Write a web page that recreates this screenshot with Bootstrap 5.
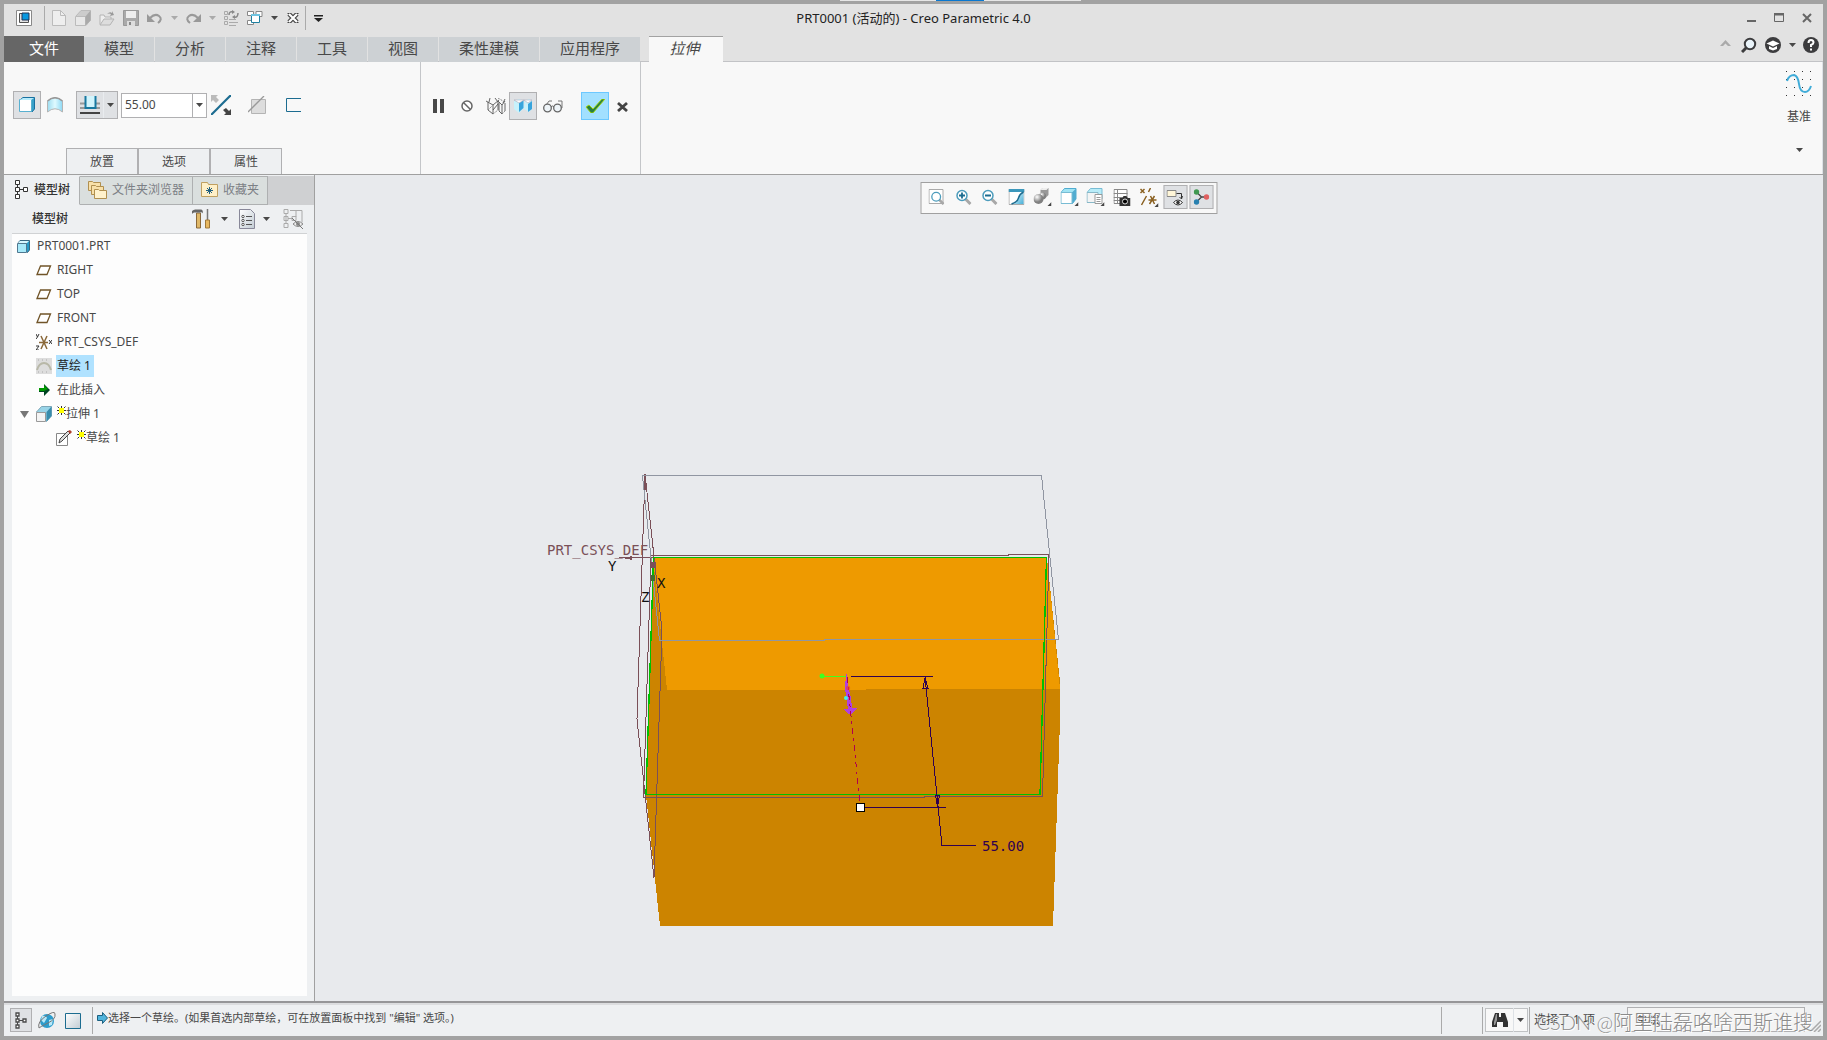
<!DOCTYPE html>
<html lang="zh-CN">
<head>
<meta charset="utf-8">
<meta name="viewport" content="width=device-width, initial-scale=1">
<title>PRT0001 (活动的) - Creo Parametric 4.0</title>
<link href="https://cdn.jsdelivr.net/npm/bootstrap@5.3.0/dist/css/bootstrap.min.css" rel="stylesheet">
<style>
:root{--frame:#a2a2a2;--ink:#484848}
body{font-family:"Noto Sans","Noto Sans CJK SC",sans-serif;font-size:12px;line-height:16px;color:var(--ink);background:#e8eaed}
button,input,select{font:inherit;color:inherit}
button{background:none;border:0;padding:0}
svg{display:block;flex:none}
.app-window{height:100vh;border:4px solid var(--frame)}
.edge-strip{top:0;left:840px;width:241px;height:1px;background:#e6e6e6}
.edge-strip span{width:48px;margin-left:96px;height:1px;background:#0a78d0}
.title-bar{height:32px;background:#e2e2e2;padding:0 0 4px 8px}
.title-text{color:#222;font-size:13px;line-height:20px}
.tool{width:24px;height:24px;display:flex;align-items:center;justify-content:center;flex:none}
.tool.drop{width:14px}
.vline{width:1px;background:#aaa;flex:none}
.vline.tall{height:24px}
.quick-bar{margin-left:-2px}
.faint{color:#aaa}
.tab-row{height:26px;background:#e2e2e2;border-bottom:1px solid #c2c3c6}
.ribbon-tab{height:25px;width:70px;margin:1px 1px 0 0;padding-bottom:3px;background:#cdd1d4;font-size:15px;line-height:22px;text-align:center}
.ribbon-tab.wide{width:100px}
.ribbon-tab.file{width:80px;height:26px;margin:0;background:#666;color:#fff}
.ribbon-tab.current{width:74px;height:26px;margin:0 0 0 8px;padding-right:3px;border-top:1px solid #a2a2a2;background:#f8f8f8;font-style:italic}
.help-tools{margin-top:-8px}
.ribbon{height:113px;background:#f8f8f8;border-bottom:1px solid #a0a0a0}
.group-a{width:417px;border-right:1px solid #c4c6c9}
.group-a .tool-row{height:28px;margin:29px 0 0 9px}
.group-b{width:220px;border-right:1px solid #c4c6c9;padding:30px 0 0 4px}
.tool.big{width:28px;height:28px}
.tool.slim{width:26px}
.tool.roomy{width:32px}
.pressed{background:#dfe1e4;border:1px solid #b0b0b2}
.accept{background:#a2e0ff;border:1px solid #6cc8ff;margin-left:12px}
.split{width:42px;height:28px;margin-left:7px}
.split .tool{height:26px}
.depth{width:86px;height:25px;margin-left:3px;border:1px solid #b0b0b2;background:#fff}
.depth input{border:0;width:70px;padding:0 3px;background:none;outline:0}
.depth button{width:15px;border-left:1px solid #b0b0b2}
.dash-tabs{padding-left:62px}
.dash-tabs button{width:72px;height:26px;border:1px solid #b0b0b2;border-bottom:0;background:#eef0f2}
.datum{padding:9px 10px 0 0}
.datum-main{height:54px}
.datum .tool{margin-top:13px}
.side{width:311px;background:#eef0f2;border-right:1px solid #a0a0a0}
.side-tabs{height:29px;margin-top:1px;background:#cfd0d2}
.side-tabs button{height:29px;padding:0 8px 2px 8px;gap:4px;border:1px solid #aeb0b1;border-left:0;background:#dadfde;color:#7c8085}
.side-tabs button.current{background:#eef0f2;border-color:transparent #aeb0b1 transparent transparent;color:#333;padding-left:10px;width:76px;gap:6px}
.side-head{height:28px;padding:0 9px 1px 28px}
.heavy{font-weight:500;color:#333}
.tree-box{margin:0 7px 5px 8px;border-top:1px solid #d0d2d4;background:#fdfdfd}
.tree-box li{height:24px;display:flex;align-items:center;gap:5px;padding-left:24px}
.tree-box li.root{padding-left:5px;gap:7px}
.tree-box li.node{padding-left:8px;gap:7px}
.tree-box li.node .fresh{margin-left:-2px}
.tree-box li.leaf{padding-left:44px}
.tree-box .picked{background:#b0e2ff;height:22px;line-height:22px;padding:0 3px 0 1px;margin-left:-1px;color:#222}
.view-tools{top:7px;width:297px;height:32px;border:1px solid #a0a0a0;background:#f8f8f8;padding:2px 3px 4px}
.status{height:35px;border-top:2px solid #969698;background:#eef0f2;box-shadow:inset 0 2px #dcdddf;padding-left:6px}
.status .vline{margin-top:2px;height:27px}
.status .split-line{margin-left:40px}
.status-nav .tool{width:22px}
.status-nav svg{margin-top:2px}
.status-text{font-size:11px;padding-bottom:3px}
.finder{width:43px;height:24px;margin:0 1px 0 2px;border:1px solid #c0c2c4;background:#f8f8f8}
.picked-count{width:93px}
.filter-box{width:178px;height:25px;border:1px solid #b0b0b2;background:#f4f4f4;padding:0 8px;appearance:none}
.grip{margin:0 2px 4px 4px}
.brand-mark{right:10px;bottom:2px;font-size:20px;line-height:24px;font-weight:300;font-family:Lato,"Noto Sans CJK SC",sans-serif;color:#8c8c8c;text-shadow:1px 1px #fff;white-space:nowrap;pointer-events:none}
.cad{font-family:"DejaVu Sans Mono","Liberation Mono",monospace;font-size:14px}
</style>
</head>
<body>
<svg width="0" height="0" class="position-absolute" aria-hidden="true">
<defs>
<linearGradient id="gBlue" x2="1" y2="1"><stop stop-color="#e8faff"/><stop offset="1" stop-color="#48b0d8"/></linearGradient>
<linearGradient id="gSheet" x2="1"><stop stop-color="#9cdcf0"/><stop offset=".5" stop-color="#e0faff"/><stop offset="1" stop-color="#8cd8f4"/></linearGradient>
<linearGradient id="gGrey" x2="1" y2="1"><stop stop-color="#fff"/><stop offset="1" stop-color="#c2ccd4"/></linearGradient>
<radialGradient id="gBall" cx=".35" cy=".3"><stop stop-color="#fff"/><stop offset="1" stop-color="#808080"/></radialGradient>
<symbol id="caret" viewBox="0 0 7 4"><path d="M0 0h7L3.500 4z" fill="currentColor"/></symbol>
<symbol id="treeIcon" viewBox="0 0 14 19"><path d="M3.500 5v10M5 9.500h5" fill="none" stroke="currentColor"/><path d="M1.500.5h4v4h-4zM1.500 7.500h4v4h-4zM1.500 14.500h4v4h-4zM9.500 7.500h4v4h-4z" fill="#fff" stroke="currentColor"/></symbol>
<symbol id="treeSmall" viewBox="0 0 12 17"><path d="M2.500 3v11M4 8.500h4" fill="none" stroke="currentColor"/><path d="M1 1h3v3H1zM1 7h3v3H1zM1 13h3v3H1zM8 7h3v3H8z" fill="#fff" stroke="currentColor" stroke-width="1.300"/></symbol>
<symbol id="plane" viewBox="0 0 16 16"><path d="M4.500 4h10l-3.500 8.500H1z" fill="#fff" stroke="#705428" stroke-width="1.300"/></symbol>
<symbol id="spark" viewBox="0 0 9 9"><path d="M4.500 0v9M0 4.500h9M.5.5l8 8M8.500.5l-8 8" stroke="#333"/><rect x="2" y="2" width="5" height="5" fill="#ff0"/></symbol>
<symbol id="lens" viewBox="0 0 16 16"><path d="m10 10 5 5" stroke="#a8a8a8" stroke-width="3"/><circle cx="6.500" cy="6.500" r="5" fill="#fff" stroke="#4c9cbc" stroke-width="1.500"/></symbol>
</defs>
</svg>

<div class="app-window d-flex flex-column overflow-hidden">
  <div class="edge-strip position-absolute"><span class="d-block"></span></div>

  <header>
    <div class="title-bar d-flex align-items-center position-relative">
      <button class="tool" aria-label="窗口"><svg width="16" height="16"><path d="M.5.5h15v15H.5z" fill="#fff" stroke="#888"/><path d="M3.500 3.500h9v9h-9z" fill="#e2e2e2" stroke="#505050"/><path d="M6 3h7v7H6z" fill="#0898e0" stroke="#235"/></svg></button>
      <span class="vline tall ms-2 me-1"></span>
      <nav class="quick-bar d-flex align-items-center" aria-label="快速访问">
        <button class="tool" aria-label="新建"><svg width="14" height="16"><path d="M.5.5h8l5 5v10H.5z" fill="#eee" stroke="#bbb"/><path d="M8.500.5v5h5" fill="none" stroke="#bbb"/></svg></button>
        <button class="tool" aria-label="模型"><svg width="16" height="16"><path d="M1 6 6 .5h9.500V10L11 15.500z" fill="#ccc" stroke="#bbb"/><path d="M.5 6.500h10v9H.5z" fill="#e8e8e8" stroke="#bbb"/><path d="m10.500 6.500 5-6v10l-5 5z" fill="#aaa"/></svg></button>
        <button class="tool" aria-label="打开"><svg width="16" height="16"><path d="M1 14.500V5h4l1 2h6v3" fill="#eee" stroke="#b4b4b4"/><path d="m1 15 4-6h10l-4 6z" fill="#ddd" stroke="#b4b4b4"/><path d="M8 4q3-3 5-1V1l2 4-4 1 1-2Q10 3 8 4" fill="#999"/></svg></button>
        <button class="tool" aria-label="保存"><svg width="16" height="16"><path d="M.5.5h15v15H.5z" fill="#aaa" stroke="#999"/><path d="M3 1h10v7H3z" fill="#eee"/><path d="M4 11h8v5H4z" fill="#ddd"/><path d="M6 12h2v3H6z" fill="#888"/></svg></button>
        <button class="tool" aria-label="撤销"><svg width="16" height="14"><path d="M3 7q5-5 9-2t-1 7" fill="none" stroke="#999" stroke-width="2"/><path d="M0 3v8h8z" fill="#999"/></svg></button>
        <button class="tool drop faint" aria-label="撤销列表"><svg width="7" height="4"><use href="#caret"/></svg></button>
        <button class="tool" aria-label="重做"><svg width="16" height="14"><path d="M13 7Q8 2 4 5t1 7" fill="none" stroke="#999" stroke-width="2"/><path d="M16 3v8H8z" fill="#999"/></svg></button>
        <button class="tool drop faint" aria-label="重做列表"><svg width="7" height="4"><use href="#caret"/></svg></button>
        <button class="tool" aria-label="重新生成"><svg width="16" height="16"><path d="M1.500 1.500h3v3h-3zM1.500 6.500h3v3h-3zM1.500 11.500h3v3h-3zM6 9.500h7M6 12.500h9M6 15.500h7" fill="none" stroke="#aaa"/><path d="M6 5q0-4 4-3M15 3q0 5-4 4" fill="none" stroke="#888" stroke-width="1.500"/><path d="M9 0v4l3-2zM12 5v4L9 7z" fill="#888"/></svg></button>
        <button class="tool" aria-label="窗口列表"><svg width="16" height="16"><path d="M.5 1.500h6v4h-6zM.5 10.500h6v4h-6zM9 1.500h6v5H9z" fill="#fff" stroke="#888"/><path d="M4.500 4.500h8v8h-8z" fill="#fff" stroke="#2080a0"/><path d="M4 4h9v2H4z" fill="#70c4e0"/></svg></button>
        <button class="tool drop" aria-label="更多窗口"><svg width="7" height="4"><use href="#caret"/></svg></button>
        <button class="tool" aria-label="关闭"><svg width="12" height="10"><path d="m2 1 8 8M10 1 2 9" stroke="#444" stroke-width="4.500"/><path d="M.5.500h3M8.500.5h3M.5 9.500h3M8.500 9.500h3" stroke="#444"/><path d="m2 1 8 8M10 1 2 9" stroke="#fff" stroke-width="2.200"/></svg></button>
        <span class="vline tall"></span>
        <button class="tool" aria-label="自定义"><svg width="9" height="7"><path d="M0 0h9v1.500H0zM0 3h9L4.500 7z" fill="#222"/></svg></button>
      </nav>
      <div class="title-text position-absolute start-50 translate-middle-x">PRT0001 (活动的) - Creo Parametric 4.0</div>
      <div class="d-flex ms-auto gap-1 pe-1">
        <button class="tool" aria-label="最小化"><svg width="10" height="10"><path d="M1 7h9v2H1z" fill="#666"/></svg></button>
        <button class="tool" aria-label="最大化"><svg width="10" height="10"><path d="M.5.5h9v8h-9z" fill="none" stroke="#666"/><path d="M0 0h10v2.500H0z" fill="#666"/></svg></button>
        <button class="tool" aria-label="关闭窗口"><svg width="10" height="10"><path d="m1 1 8 8M9 1 1 9" stroke="#666" stroke-width="2"/></svg></button>
      </div>
    </div>

    <div class="tab-row d-flex">
      <button class="ribbon-tab file">文件</button>
      <button class="ribbon-tab">模型</button>
      <button class="ribbon-tab">分析</button>
      <button class="ribbon-tab">注释</button>
      <button class="ribbon-tab">工具</button>
      <button class="ribbon-tab">视图</button>
      <button class="ribbon-tab wide">柔性建模</button>
      <button class="ribbon-tab wide">应用程序</button>
      <button class="ribbon-tab current">拉伸</button>
      <div class="help-tools d-flex ms-auto align-items-center">
        <button class="tool" aria-label="折叠"><svg width="11" height="10"><path d="M0 6 5.500 0 11 6H8L5.500 3.500 3 6z" fill="#aaa"/></svg></button>
        <button class="tool" aria-label="搜索"><svg width="16" height="16"><path d="m1 15 5-5" stroke="#3c3c3e" stroke-width="3"/><circle cx="9" cy="7" r="5.200" fill="#eaf4fa" stroke="#3c3c3e" stroke-width="2"/></svg></button>
        <button class="tool" aria-label="学习"><svg width="16" height="16"><circle cx="8" cy="8" r="8" fill="#3c3c3e"/><path d="m1.500 6.500 6.500-3 6.500 3-6.500 3z" fill="#fff"/><path d="M4 9v3l4 1.500 4-1.500V9l-4 2z" fill="#fff"/></svg></button>
        <button class="tool drop" aria-label="学习列表"><svg width="7" height="4"><use href="#caret"/></svg></button>
        <button class="tool" aria-label="帮助"><svg width="16" height="16"><circle cx="8" cy="8" r="8" fill="#3c3c3e"/><path d="M5.500 6q0-3 2.500-3t2.500 2.500Q10.500 7 8 8v2" fill="none" stroke="#fff" stroke-width="2"/><path d="M7 11.500h2v2H7z" fill="#fff"/></svg></button>
      </div>
    </div>

    <div class="ribbon d-flex">
      <section class="group-a d-flex flex-column justify-content-between">
        <div class="tool-row d-flex align-items-center">
          <button class="tool big pressed" aria-label="实体"><svg width="16" height="16"><path d="M1 3 4 .5h11.500V12L13 15z" fill="#38a0c8" stroke="#1870a0"/><path d="M.5 2.500h12v12H.5z" fill="#fff" stroke="#58b0d0"/><path d="M1 3 4 1h11l-3 2z" fill="#b8ecfc"/></svg></button>
          <button class="tool big" aria-label="曲面"><svg width="16" height="16"><path d="M.5 4Q8-2.500 15.500 4v11Q8 8.500.5 15z" fill="url(#gSheet)" stroke="#b4b4b4"/><path d="M.5 4Q8-2.500 15.500 4" stroke="#999" stroke-width="1.500" fill="none"/></svg></button>
          <div class="split pressed d-flex">
            <button class="tool w-auto flex-grow-1" aria-label="深度"><svg width="20" height="18"><path d="M0 7.500h20M0 12h20" stroke="#999" stroke-width="2"/><path d="M5.500 0v12h10V0" fill="#d2f4fc" stroke="#1878a0" stroke-width="2"/><path d="M0 16h20v2H0z" fill="#444"/></svg></button>
            <button class="tool drop border-start border-secondary-subtle" aria-label="深度选项"><svg width="7" height="4"><use href="#caret"/></svg></button>
          </div>
          <div class="depth d-flex"><input type="text" value="55.00" aria-label="深度值"><button class="d-flex align-items-center justify-content-center" aria-label="深度列表"><svg width="7" height="4"><use href="#caret"/></svg></button></div>
          <button class="tool big" aria-label="反向"><svg width="20" height="20"><path d="M0 20 20 0" stroke="#1c6c90" stroke-width="2.200"/><path d="M0 0h7L5 2l3 3-3 3-3-3-2 2z" fill="#bbb"/><path d="M20 20h-7l2-2-3-3 3-2 3 3 2-2z" fill="#444"/></svg></button>
          <button class="tool big ms-2" aria-label="移除材料"><svg width="18" height="18"><path d="M3.500 3.500h14v14h-14z" fill="#ddd" stroke="#b4b4b4"/><path d="M0 16 16 0" stroke="#999" stroke-width="1.300"/></svg></button>
          <button class="tool big ms-2" aria-label="加厚"><svg width="16" height="16"><path d="M16 1.500H1.500v13H16" fill="none" stroke="#1c6c90"/></svg></button>
        </div>
        <div class="dash-tabs d-flex"><button>放置</button><button>选项</button><button>属性</button></div>
      </section>
      <section class="group-b d-flex align-items-start">
        <button class="tool big slim" aria-label="暂停"><svg width="11" height="14"><path d="M0 0h4v14H0zM7 0h4v14H7z" fill="#484848"/></svg></button>
        <button class="tool big roomy" aria-label="无预览"><svg width="12" height="12"><circle cx="6" cy="6" r="5" fill="#fff" stroke="#666" stroke-width="1.500"/><path d="m2.500 2.500 7 7" stroke="#666" stroke-width="1.500"/></svg></button>
        <button class="tool big slim" aria-label="分离"><svg width="20" height="17"><path d="M0 3l7 4 6-5M2 4v8l5 4M7 7v9M4 0l-1 4M9 0l3 4v8M12 3l4 4 3-4M12 6 7 12M13 5v8l3 3V7M19 1l-2 4M19 5v8" fill="none" stroke="#555" stroke-width=".9"/><path d="M2 12l4-4M12 0l5 3M7 16l5-4M16 16l3-3" fill="none" stroke="#888" stroke-dasharray="2 1"/></svg></button>
        <button class="tool big pressed" aria-label="已附加"><svg width="18" height="14"><path d="M0 2 5 0l5 2v7l-5 5-5-4z" fill="#c8f2fc"/><path d="M5 4 9.500 1v8L5 13z" fill="#38a4dc"/><path d="M11 2l4-2 3 2v8l-3 3-5-3z" fill="#c8f2fc"/><path d="m14 5 4-3v8l-4 3z" fill="#38a4dc"/><path d="M0 1h10L5 4zM10 1h8l-4 3z" fill="#fff" stroke="#aab" stroke-width=".6"/></svg></button>
        <button class="tool big roomy" aria-label="预览"><svg width="20" height="13"><path d="M1 8 6 1h3M19 8V1h-4" fill="none" stroke="#777"/><circle cx="4.500" cy="8" r="3.800" fill="#eef4f8" stroke="#666" stroke-width="1.300"/><circle cx="14.500" cy="8" r="3.800" fill="#eef4f8" stroke="#666" stroke-width="1.300"/><path d="M8 7q1.500-2 3 0" fill="none" stroke="#666"/></svg></button>
        <button class="tool big accept" aria-label="确定"><svg width="20" height="14"><path d="M1 8 4 6l4 4L17 0h3L8 14H6z" fill="#288040" stroke="#a8d800" stroke-width=".9"/></svg></button>
        <button class="tool big" aria-label="取消"><svg width="12" height="12"><path d="m1 3 9 8M10 3 1 11" stroke="#444" stroke-width="2.800"/></svg></button>
      </section>
      <section class="datum d-flex flex-column align-items-center ms-auto border-end">
        <button class="datum-main d-flex flex-column align-items-center justify-content-between"><svg width="26" height="26"><path d="M0 0h1v1H0zM8 0h1v1H8zM16 0h1v1h-1zM24 0h1v1h-1zM0 8h1v1H0zM8 8h1v1H8zM16 8h1v1h-1zM24 8h1v1h-1zM0 16h1v1H0zM8 16h1v1H8zM16 16h1v1h-1zM24 16h1v1h-1zM0 24h1v1H0zM8 24h1v1H8zM16 24h1v1h-1zM24 24h1v1h-1z" fill="#333"/><path d="M1 10Q3 4 8 4q4 1 5 9t6 8q4 0 6-6" fill="none" stroke="#40acd8" stroke-width="2"/></svg><span>基准</span></button>
        <button class="tool" aria-label="基准列表"><svg width="7" height="4"><use href="#caret"/></svg></button>
      </section>
    </div>
  </header>

  <div class="d-flex flex-grow-1 overflow-hidden">
    <aside class="side d-flex flex-column flex-shrink-0">
      <div class="side-tabs d-flex">
        <button class="current d-flex align-items-center heavy"><svg width="14" height="19"><use href="#treeIcon"/></svg>模型树</button>
        <button class="d-flex align-items-center"><svg width="20" height="19"><g fill="#f8e0a8" stroke="#b09050"><path d="M.5 1.500h4l1 1h7v8h-12z"/><path d="M3.500 5.500h4l1 1h7v8h-12z"/><path d="M6.500 9.500h4l1 1h7v8h-12z" fill="#fff2cc"/></g></svg>文件夹浏览器</button>
        <button class="d-flex align-items-center"><svg width="18" height="16"><path d="M.5.5h6l1 2h9v12H.5z" fill="#fff0c8" stroke="#c0a060"/><path d="M8.500 5v7M5 8.500h7M6 6l5 5M11 6l-5 5" stroke="#206080"/></svg>收藏夹</button>
      </div>
      <div class="side-head d-flex align-items-center">
        <span class="heavy me-auto">模型树</span>
        <button class="tool" aria-label="设置"><svg width="18" height="20"><path d="M4.500 4h4v15h-4z" fill="#e0b868" stroke="#8a6838"/><path d="M0 2Q2 0 4 .5h5q2 0 2 4-1-2-3-1H3Q1 3 0 5z" fill="#666"/><path d="M15.500 0v12" stroke="#777" stroke-width="1.500"/><path d="M13.500 11h4v8h-4z" fill="#e8b860" stroke="#a07838"/></svg></button>
        <button class="tool drop mx-1" aria-label="设置列表"><svg width="7" height="4"><use href="#caret"/></svg></button>
        <button class="tool" aria-label="显示"><svg width="16" height="20"><path d="M.5.5h11l4 4v15H.5z" fill="url(#gGrey)" stroke="#889"/><path d="M7 7.500h6M7 11.500h6M7 15.500h6" stroke="#555"/><g fill="#fff" stroke="#555"><circle cx="4" cy="7.500" r="1.200"/><circle cx="4" cy="11.500" r="1.200"/><circle cx="4" cy="15.500" r="1.200"/></g></svg></button>
        <button class="tool drop me-2" aria-label="显示列表"><svg width="7" height="4"><use href="#caret"/></svg></button>
        <button class="tool faint" aria-label="隐藏"><svg width="20" height="20"><path d="M1 .5h4v4H1zM1 7.500h4v4H1zM1 14.500h4v4H1zM9 7.500h4v4H9zM3 5v9M5 9.500h4M7 1.500h12v12M13 2v6" fill="none" stroke="currentColor"/><path d="M10 15q5-5 10 0-5 5-10 0" fill="#eee" stroke="#888"/><circle cx="15" cy="15" r="2" fill="#888"/><path d="m9 9 11 11" stroke="#777"/></svg></button>
      </div>
      <ul class="tree-box list-unstyled flex-grow-1">
        <li class="root"><svg width="13" height="13"><path d="M1 3 3 .5h9.500V10l-2 2.500z" fill="#289cc8" stroke="#386880"/><path d="M.5 3.500h9v9h-9z" fill="#a8eafa" stroke="#507890"/><path d="M1 3 3 1h9l-2 2z" fill="#d8f8ff"/></svg>PRT0001.PRT</li>
        <li><svg width="16" height="16"><use href="#plane"/></svg>RIGHT</li>
        <li><svg width="16" height="16"><use href="#plane"/></svg>TOP</li>
        <li><svg width="16" height="16"><use href="#plane"/></svg>FRONT</li>
        <li><svg width="16" height="16"><path d="M3 8.500h9M5 2l6 13M11 2 5 15" stroke="#8a6838" stroke-width="1.500"/><path d="m0 0 1.500 3L3 0M1.500 3 0 5M0 12h3l-3 4h3M13 6l3 4M16 6l-3 4" fill="none" stroke="#333"/></svg>PRT_CSYS_DEF</li>
        <li><svg width="16" height="16"><path d="M0 0h16v16H0z" fill="#ddd"/><path d="M1 12Q3 5 8 5t7 7" fill="none" stroke="#b8b8a8" stroke-width="2"/><path d="M2 2h12M2 14h12" stroke="#aaa" stroke-dasharray="1 3"/></svg><span class="picked">草绘 1</span></li>
        <li><svg width="16" height="16"><path d="M3 6h5V2l6 6-6 6v-4H3z" fill="#042"/><path d="M3 6h5V3l4 4-4 2H3z" fill="#090"/></svg>在此插入</li>
        <li class="node"><svg width="9" height="7"><path d="M0 0h9L4.500 7z" fill="#777"/></svg><svg width="16" height="16"><path d="m.5 6 5-5.500h10V10l-5 5.500z" fill="#98d4e8" stroke="#80a8b8"/><path d="m10.500 6 5-5.500V10l-5 5.500z" fill="#388cac"/><path d="M.5 6.500h9v9h-9z" fill="#f4f4f4" stroke="#999"/></svg><span class="fresh d-flex"><svg width="9" height="9"><use href="#spark"/></svg>拉伸 1</span></li>
        <li class="leaf"><svg width="16" height="16"><path d="M.5 3.500h11v12H.5z" fill="#fff" stroke="#888"/><path d="m3 13 1-4 8-8 2 2-8 8z" fill="#ddd" stroke="#444"/><path d="m12 1 2-1 2 2-2 2z" fill="#b04030"/></svg><span class="fresh d-flex"><svg width="9" height="9"><use href="#spark"/></svg>草绘 1</span></li>
      </ul>
    </aside>

    <main class="position-relative flex-grow-1 overflow-hidden">
      <div class="view-tools position-absolute start-50 translate-middle-x d-flex justify-content-between align-items-center" role="toolbar">
        <button class="tool" aria-label="重新调整"><svg width="16" height="16"><path d="M.5.5h14v14H.5z" fill="#fff" stroke="#aaa"/><svg x="2" y="2" width="14" height="14"><use href="#lens"/></svg></svg></button>
        <button class="tool" aria-label="放大"><svg width="16" height="16"><use href="#lens"/><path d="M3.500 6.500h6M6.500 3.500v6" stroke="#1c6c90" stroke-width="1.800"/></svg></button>
        <button class="tool" aria-label="缩小"><svg width="16" height="16"><use href="#lens"/><path d="M3.500 6.500h6" stroke="#1c6c90" stroke-width="1.800"/></svg></button>
        <button class="tool" aria-label="重画"><svg width="16" height="16"><path d="M.5.5h15v15H.5z" fill="#fff" stroke="#aaa"/><path d="M0 0h16v3H0z" fill="#3c98bc"/><path d="M15 3v12H5q3-1 5-5t5-7" fill="url(#gBlue)"/><path d="M15 3q-4 2-5 6t-7 6" fill="none" stroke="#1c6c90" stroke-width="1.500"/></svg></button>
        <button class="tool" aria-label="着色"><svg width="18" height="18"><path d="M7 2 9 0h6v7l-3 3H7z" fill="#999"/><path d="M7 2 9 0h6l-2 2z" fill="#eee"/><circle cx="9" cy="8" r="3.500" fill="url(#gBall)"/><circle cx="5" cy="11" r="5" fill="url(#gBall)"/><path d="M18 14v4h-4z" fill="#444"/></svg></button>
        <button class="tool" aria-label="显示样式"><svg width="18" height="18"><path d="M.5 4.500 4 .5h11.500V11L12 15.500z" fill="#50acd0" stroke="#50acd0"/><path d="M.5 4.500h11v11H.5z" fill="#fff" stroke="#78bcd4"/><path d="m1 4 3-3h11l-3 3z" fill="#a0e4f4"/><path d="M18 14v4h-4z" fill="#444"/></svg></button>
        <button class="tool" aria-label="已保存方向"><svg width="18" height="18"><path d="M.5 4.500 4 .5h11.500V11L12 14.500z" fill="#b8ecf8" stroke="#78bcd4"/><path d="M.5 4.500h11v10H.5z" fill="#f4f4f4" stroke="#88b8c8"/><path d="M8.500 6.500h7v9h-7z" fill="#fff" stroke="#999"/><path d="M10 9.500h4M10 11.500h4M10 13.500h4" stroke="#999"/><path d="M18 14v4h-4z" fill="#444"/></svg></button>
        <button class="tool" aria-label="视图管理器"><svg width="17" height="17"><path d="M.5.500h13v14H.5zM4 .5v14M0 4.500h14M0 8.500h14M0 11.500h14" fill="#fff" stroke="#888"/><path d="M6 9h3l1-2h3l1 2h3v8H6z" fill="#333"/><circle cx="11.500" cy="12.500" r="2.500" stroke="#ddd"/></svg></button>
        <button class="tool" aria-label="基准显示"><svg width="19" height="19"><path d="m1 1 4 4M5 1 1 5M11 0 9 4M7 8l-5 9M9 12h8M11 8l4 8M15 8l-5 8" stroke="#8a6020" stroke-width="1.500"/><path d="M19 15v4h-4z" fill="#444"/></svg></button>
        <button class="tool pressed" aria-label="注释显示"><svg width="17" height="17"><path d="M.5 1.500h9v6h-9z" fill="#fff6d8" stroke="#888"/><path d="M10 4.500h5v5M13 8l2 2 1-3" fill="none" stroke="#333"/><path d="M7 13.500q4.500-5 9 0-4.500 5-9 0" fill="#fff" stroke="#333"/><circle cx="11.500" cy="13.500" r="1.800" fill="#333"/></svg></button>
        <button class="tool pressed" aria-label="旋转中心"><svg width="16" height="16"><path d="m3 3 5 5-5 5M8 8h5" fill="none" stroke="#444" stroke-width="1.300"/><circle cx="3" cy="3" r="2.700" fill="#409850"/><circle cx="3" cy="13" r="2.700" fill="#2880b0"/><circle cx="13" cy="8" r="2.700" fill="#e06060"/></svg></button>
      </div>

      <svg class="w-100 h-100" viewBox="315 175 1508 826" role="img" aria-label="PRT0001 模型视图">
        <g shape-rendering="crispEdges">
          <path d="M653 558h394l13 124v39l-7 205H660L646 795z" fill="#cc8400"/>
          <path d="M653 558h394l13 131-131 0-126 1H667z" fill="#ee9a00"/>
          <g fill="none" stroke="#7a5058">
            <path d="M645 474 662 630 654 878 637 719z"/>
            <path d="M643.500 797.500 651 555.500 1008 555.500V554.500H1049L1042.500 796.500H924V797.500z"/>
            <path d="M619 557.500h36M645 474v16"/>
          </g>
          <path d="M642.500 475.500H1041.500L1058.500 639.500H824V640.500H659.500z" fill="none" stroke="#9096a2"/>
          <path d="M653.500 557.500H1046.500L1040 794.500H646z" fill="none" stroke="#00c000" stroke-width="1.300"/>
          <path d="M622 558l10-2v4zM651 562h5v6h-5z" fill="#7a5058"/>
          <path d="M651 575h4v6h-4z" fill="#407030"/>
          <path d="M822 676.500h25" stroke="#40ff20" stroke-width="1.300"/>
          <path d="M846 674h1l1 12 3 12 1 10h5l-6 6h-2l-6-5h5l-3-21z" fill="#b040e0"/>
          <path d="M847 677 860 803" stroke="#b00050" stroke-dasharray="6 4 3 4"/>
          <g fill="none" stroke="#300050"><path d="M851 676.500h82M860 807.500h86M925 677 942 845.500H976"/><path d="m925 678 3 10h-5zM935.500 795.500h4l-2 11z"/></g>
          <path d="M856.500 803.500h8v8h-8z" fill="#fff" stroke="#000"/>
        </g>
        <circle cx="822" cy="676" r="2.500" fill="#40ff20"/>
        <circle cx="848" cy="688" r="2.200" fill="#f04030" opacity=".6"/>
        <circle cx="846" cy="698" r="2" fill="#40f0e8"/>
        <g class="cad">
          <text x="547" y="555" fill="#7a5058">PRT_CSYS_DEF</text>
          <g fill="#111"><text x="608" y="571">Y</text><text x="657" y="588">X</text><text x="641" y="602">Z</text></g>
          <text x="982" y="851" fill="#300050">55.00</text>
        </g>
      </svg>
    </main>
  </div>

  <footer class="status d-flex align-items-center position-relative flex-shrink-0">
    <div class="status-nav d-flex align-items-center gap-1">
      <button class="tool pressed" aria-label="导航器"><svg width="12" height="17"><use href="#treeSmall"/></svg></button>
      <button class="tool" aria-label="浏览器"><svg width="18" height="18"><circle cx="9" cy="9" r="7" fill="#2c9ccc"/><path d="M4 4q4-1 5 2l-3 5-3-3zM11 8l4-1-1 6-3 1z" fill="#b8e8f8"/><path d="M1 16Q-1 10 8 4t9-2q1 5-7 9T1 16" fill="none" stroke="#777"/></svg></button>
      <button class="tool" aria-label="全屏"><svg width="16" height="16"><path d="M.5.5h15v15H.5z" fill="url(#gGrey)" stroke="#1c6c90"/></svg></button>
    </div>
    <span class="vline ms-2 me-1"></span>
    <svg width="11" height="12" class="mb-1"><path d="M.5 3.500h5V.500L10.500 6 5.500 11.500v-3h-5z" fill="#50b4dc" stroke="#1c6080"/></svg>
    <span class="status-text">选择一个草绘。(如果首选内部草绘，可在放置面板中找到 "编辑" 选项。)</span>
    <span class="vline ms-auto"></span>
    <span class="vline split-line"></span>
    <div class="finder d-flex align-items-center">
      <button class="tool w-auto flex-grow-1" aria-label="查找"><svg width="16" height="14"><path d="M3 0h4v4h2V0h4l3 9v5h-5V9H5v5H0V9z" fill="#333"/><path d="M4 1h1v6l-2 5H2V9z" fill="#999"/></svg></button>
      <button class="tool drop border-start" aria-label="查找列表"><svg width="7" height="4"><use href="#caret"/></svg></button>
    </div>
    <span class="vline"></span>
    <label for="filter" class="picked-count ms-1">选择了 1 项</label>
    <select id="filter" class="filter-box"><option>草绘</option></select>
    <svg width="12" height="12" class="grip align-self-end"><path d="M1 12 12 1M5 12l7-7M9 12l3-3" stroke="#aaa" stroke-width="1.500"/></svg>
    <div class="brand-mark position-absolute">CSDN @阿里陆磊咯啥西斯谁搜</div>
  </footer>
</div>
<script src="https://cdn.jsdelivr.net/npm/bootstrap@5.3.0/dist/js/bootstrap.bundle.min.js"></script>
</body>
</html>
